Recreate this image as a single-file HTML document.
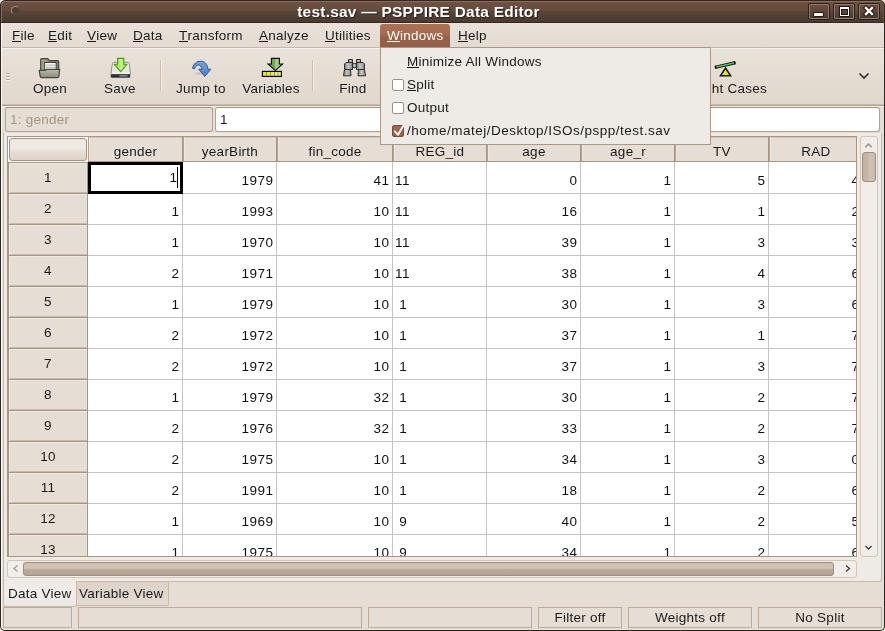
<!DOCTYPE html>
<html><head><meta charset="utf-8">
<style>
*{margin:0;padding:0;box-sizing:border-box}
html,body{width:885px;height:631px;overflow:hidden;background:#efe9e2}
body{position:relative;font-family:"Liberation Sans",sans-serif;font-size:14px;color:#1a1a1a}
.a{position:absolute}
.t{position:absolute;white-space:pre;font-size:13.5px;line-height:17px;letter-spacing:0.25px}
u{text-decoration:none;position:relative}
u::after{content:"";position:absolute;left:0;right:0;top:13px;height:1px;background:currentColor}
#title{left:0;top:0;width:885px;height:23px;background:linear-gradient(#6f5344 0%,#654b3d 45%,#594539 48%,#4b3a30 100%);border:1px solid #33271f;border-radius:5px 5px 0 0;box-shadow:inset 1px 1px #8a6a58,inset -1px 0 #6b5244}
#menubar{left:1px;top:23px;width:883px;height:25px;background:linear-gradient(#e9e2da,#e3dad1);border-bottom:1px solid #c8b8a8}
#toolbar{left:1px;top:48px;width:883px;height:58px;background:linear-gradient(#e9e2da,#e0d7cd);border-top:1px solid #f6f3f0;border-bottom:1px solid #b3a08d;box-shadow:0 1px #f4f0ec,inset 0 -1px #cbbcad}
.sep{position:absolute;top:60px;width:2px;height:31px;border-left:1px solid #cbbcad;border-right:1px solid #f3efeb}
.entry{position:absolute;top:107px;height:25px;border:1px solid #b3a291;border-top-color:#a48f7c;border-radius:3px}
.hdr{position:absolute;background:#e6ddd4;border-left:1px solid #b3a08e;border-right:1px solid #a89584;border-bottom:1px solid #a89584;box-shadow:inset 1px 0 #efe9e3,inset 0 1px #d3c5b8}
.ht{position:absolute;left:0;width:100%;top:6px;text-align:center;white-space:pre;font-size:13.5px;line-height:17px;letter-spacing:0.25px}
.rh{position:absolute;left:0;width:80px;background:#e6ddd4;border-left:1px solid #a89584;border-right:1px solid #a89584;border-bottom:1px solid #a89584;box-shadow:inset 1px 1px #efe9e3,inset 0 -1px #c9baab,1px 0 #bba996}
.rt{position:absolute;left:0;width:100%;text-align:center;white-space:pre;font-size:13.5px;line-height:17px;letter-spacing:0.25px}
.cell{position:absolute;border-right:1px solid #c4c4c4;border-bottom:1px solid #c4c4c4;background:#fff}
.ct{position:absolute;white-space:pre;font-size:13.5px;line-height:16px;color:#111;letter-spacing:0.5px}
.stat{position:absolute;top:607px;height:21px;border:1px solid #bcab99;text-align:center}
.popup{left:380px;top:47px;width:331px;height:98px;background:#eeeae5;border:1px solid #a99888}
.cb{position:absolute;left:392px;width:12px;height:12px;border:1px solid #a38f7d;border-radius:2px;background:#fff}
</style></head><body><div id="root" class="a" style="left:0;top:0;width:885px;height:631px;will-change:transform">
<!-- window frame -->
<div class="a" style="left:0;top:12px;width:885px;height:619px;background:#e6ddd4;border-radius:0 0 5px 5px"></div>

<!-- title bar -->
<div id="title" class="a"></div>
<div class="a" style="left:11px;top:6px;width:9px;height:9px;border-radius:50%;border:1px solid #9d8c82;border-right-color:#5f4c41;border-bottom-color:#5f4c41;background:#4f3c32"></div>
<div class="t" style="left:218.5px;top:3px;width:400px;text-align:center;font-weight:bold;font-size:15.45px;line-height:17px;color:#fff;text-shadow:1px 1px 1px #2a1f19">test.sav — PSPPIRE Data Editor</div>

<!-- menubar -->
<div id="menubar" class="a"></div>
<div class="a" style="left:380px;top:24px;width:70px;height:23px;background:linear-gradient(#ab7256 0%,#a46a4f 48%,#98614a 52%,#925c46 100%);border-radius:3px 3px 0 0"></div>
<div class="t" style="left:12px;top:27px"><u>F</u>ile</div>
<div class="t" style="left:48px;top:27px"><u>E</u>dit</div>
<div class="t" style="left:87px;top:27px"><u>V</u>iew</div>
<div class="t" style="left:133px;top:27px"><u>D</u>ata</div>
<div class="t" style="left:179px;top:27px"><u>T</u>ransform</div>
<div class="t" style="left:259px;top:27px"><u>A</u>nalyze</div>
<div class="t" style="left:325px;top:27px"><u>U</u>tilities</div>
<div class="t" style="left:387px;top:27px;color:#fff"><u>W</u>indows</div>
<div class="t" style="left:458px;top:27px"><u>H</u>elp</div>

<!-- toolbar -->
<div id="toolbar" class="a"></div>

<svg class="a" style="left:0;top:0" width="885" height="106" viewBox="0 0 885 106">
<defs>
<linearGradient id="gfold" x1="0" y1="0" x2="0" y2="1"><stop offset="0" stop-color="#b9bba8"/><stop offset="1" stop-color="#8b8d7a"/></linearGradient>
<linearGradient id="gback" x1="0" y1="0" x2="1" y2="0"><stop offset="0" stop-color="#a3a593"/><stop offset="1" stop-color="#7d7f6e"/></linearGradient>
<linearGradient id="ggreen" x1="0" y1="0" x2="1" y2="0"><stop offset="0" stop-color="#73d216"/><stop offset="0.55" stop-color="#c6f59a"/><stop offset="1" stop-color="#8ae234"/></linearGradient>
<linearGradient id="gdrive" x1="0" y1="0" x2="0" y2="1"><stop offset="0" stop-color="#f6f6f4"/><stop offset="0.7" stop-color="#e2e3df"/><stop offset="1" stop-color="#fbfbfa"/></linearGradient>
<linearGradient id="gvar" x1="0" y1="0" x2="1" y2="0"><stop offset="0" stop-color="#5f9444"/><stop offset="0.5" stop-color="#79a95c"/><stop offset="0.52" stop-color="#a4cf8a"/><stop offset="1" stop-color="#8fbf72"/></linearGradient>
<linearGradient id="gyel" x1="0" y1="0" x2="1" y2="0"><stop offset="0" stop-color="#e6e600"/><stop offset="1" stop-color="#f2f29a"/></linearGradient>
<linearGradient id="gbin" x1="0" y1="0" x2="1" y2="0"><stop offset="0" stop-color="#7d7f7a"/><stop offset="0.45" stop-color="#c4c6c1"/><stop offset="1" stop-color="#8a8c87"/></linearGradient>
<linearGradient id="gblue" x1="0" y1="0" x2="0" y2="1"><stop offset="0" stop-color="#7aa3d6"/><stop offset="1" stop-color="#4a7cc0"/></linearGradient>
<radialGradient id="gshadow"><stop offset="0" stop-color="#9e948a" stop-opacity="0.5"/><stop offset="1" stop-color="#9e948a" stop-opacity="0"/></radialGradient>
</defs>
<!-- handle -->
<g fill="#b5a595"><rect x="6" y="73" width="4" height="1"/><rect x="6" y="76" width="4" height="1"/><rect x="6" y="79" width="4" height="1"/></g>
<g fill="#f5f1ed"><rect x="6" y="74" width="4" height="1"/><rect x="6" y="77" width="4" height="1"/><rect x="6" y="80" width="4" height="1"/></g>
<!-- open folder -->
<path d="M40.7 59.7 Q40.7 58.6 41.8 58.6 L47.8 58.6 L49.2 60.7 L57.6 60.7 Q58.7 60.7 58.7 61.8 L58.7 70.5 L40.7 70.5 Z" fill="url(#gback)" stroke="#45463f" stroke-width="1.2"/>
<rect x="44.7" y="62.5" width="11.4" height="7.6" fill="#fdfdfc" stroke="#3f403a" stroke-width="1"/>
<rect x="46" y="64.6" width="9" height="1" fill="#a9aaa4"/><rect x="46" y="66.8" width="9" height="1" fill="#a9aaa4"/>
<path d="M39.2 70.3 L45.5 70.3 L46.3 69.4 L59.7 69.4 L58.8 76.4 Q58.6 77.6 57.4 77.6 L41.6 77.6 Q40.4 77.6 40.2 76.4 Z" fill="url(#gfold)" stroke="#45463f" stroke-width="1.2" stroke-linejoin="round"/>
<!-- save -->
<path d="M112.4 63.4 Q112.6 62.4 113.6 62.4 L128 62.4 Q129 62.4 129.2 63.4 L130.6 74.4 L110.8 74.4 Z" fill="url(#gdrive)" stroke="#8d8f8a" stroke-width="1"/>
<rect x="110.8" y="74.3" width="19.4" height="3.5" rx="1" fill="#2e3436"/>
<rect x="119.5" y="75.2" width="8" height="1.4" fill="#8b8e8a"/>
<path d="M117.6 58.4 L123.8 58.4 L123.8 64.3 L126.9 64.3 L120.7 71.6 L114.2 64.3 L117.6 64.3 Z" fill="url(#ggreen)" stroke="#4e9a06" stroke-width="1.1" stroke-linejoin="miter"/>
<!-- separators -->
<rect x="160" y="60" width="1" height="31" fill="#cbbdb0"/><rect x="161" y="60" width="1" height="31" fill="#f2ede8"/>
<rect x="312" y="60" width="1" height="31" fill="#cbbdb0"/><rect x="313" y="60" width="1" height="31" fill="#f2ede8"/>
<!-- jump to -->
<ellipse cx="199" cy="73.5" rx="6" ry="2" fill="url(#gshadow)"/>
<path d="M192.6 68.3 C193.4 63.6 196.8 61.2 200.6 61.2 C204.6 61.2 207.4 63.8 207.9 69.2 L210.9 69.2 L204.7 76.4 L198.7 69.2 L201.8 69.2 C201.4 66.3 200.4 65 198.8 65 C196.9 65 195.3 66.4 194.5 68.8 Z" fill="url(#gblue)" stroke="#2a5aa3" stroke-width="1" stroke-linejoin="round"/>
<!-- variables -->
<path d="M271.4 58.4 L279.4 58.4 L279.4 64 L282.6 64 L275.3 70.6 L268 64 L271.4 64 Z" fill="url(#gvar)" stroke="#0c0c0c" stroke-width="1.1"/>
<rect x="262.4" y="71.4" width="19" height="5" fill="url(#gyel)" stroke="#0c0c0c" stroke-width="1.2"/>
<g fill="#8a8a6a"><rect x="266.2" y="72" width="0.9" height="4"/><rect x="270" y="72" width="0.9" height="4"/><rect x="274" y="72" width="0.9" height="4"/><rect x="277.6" y="72" width="0.9" height="4"/></g>
<!-- find binoculars -->
<g stroke="#2b2d2a" stroke-width="1" fill="url(#gbin)" stroke-linejoin="round">
<rect x="348.5" y="59.5" width="4" height="3.5"/><rect x="356.5" y="59.5" width="4" height="3.5"/>
<path d="M346 62.5 L352.5 62.5 L352.5 69.5 L344.5 69.5 L344.5 64 Z"/><path d="M356.5 62.5 L363 62.5 L364.5 64 L364.5 69.5 L356.5 69.5 Z"/>
<circle cx="354.5" cy="65.5" r="2.2"/>
<path d="M344.5 69.5 L350.5 69.5 L351 75.8 L343.5 75.8 Z"/><path d="M358.5 69.5 L364.5 69.5 L365.5 75.8 L358 75.8 Z"/>
</g>
<!-- weight cases -->
<path d="M716.4 67 L734 63" stroke="#111" stroke-width="3.3" stroke-linecap="square"/>
<path d="M716.4 67 L734 63" stroke="#5cc25c" stroke-width="1.3" stroke-linecap="butt"/>
<path d="M725.5 68 L730.6 75.8 L720.4 75.8 Z" fill="#e6e600" stroke="#111" stroke-width="1.5" stroke-linejoin="miter"/>
<!-- chevron -->
<path d="M859.5 73.5 L864 78 L868.5 73.5" fill="none" stroke="#2e2e2e" stroke-width="1.6"/>
</svg>
<div class="t" style="left:0;top:80px;width:100px;text-align:center">Open</div>
<div class="t" style="left:70px;top:80px;width:100px;text-align:center">Save</div>
<div class="t" style="left:151px;top:80px;width:100px;text-align:center">Jump to</div>
<div class="t" style="left:221px;top:80px;width:100px;text-align:center">Variables</div>
<div class="t" style="left:303px;top:80px;width:100px;text-align:center">Find</div>
<div class="t" style="left:667px;top:80px;width:100px;text-align:right">Weight Cases</div>

<!-- entries -->
<div class="entry" style="left:5px;width:208px;background:#e6ddd4"></div>
<div class="t" style="left:10px;top:111px;color:#a39484">1: gender</div>
<div class="entry" style="left:215px;width:665px;background:#fff"></div>
<div class="t" style="left:220px;top:111px">1</div>

<!-- notebook page -->
<div class="a" style="left:3px;top:133px;width:879px;height:449px;border:1px solid #c9b9a9;border-top:none;border-radius:0 0 3px 3px;background:#eeeae5"></div>
<!-- grid frame -->
<div class="a" style="left:7px;top:136px;width:850px;height:421px;border:1px solid #a89584;background:#fff"></div>
<div class="a" style="left:8px;top:137px;width:848px;height:419px;overflow:hidden;background:#fff">
<div class="a" style="left:1px;top:1px;width:78px;height:23px;border:1px solid #a59282;border-radius:3px;background:linear-gradient(#ebe5df 0%,#f0ebe6 45%,#e7e0d8 55%,#ddd3c9 100%)"></div>
<div class="hdr" style="left:80px;top:0;width:95px;height:25px"><span class="ht">gender</span></div>
<div class="hdr" style="left:175px;top:0;width:94px;height:25px"><span class="ht">yearBirth</span></div>
<div class="hdr" style="left:269px;top:0;width:116px;height:25px"><span class="ht">fin_code</span></div>
<div class="hdr" style="left:385px;top:0;width:94px;height:25px"><span class="ht">REG_id</span></div>
<div class="hdr" style="left:479px;top:0;width:94px;height:25px"><span class="ht">age</span></div>
<div class="hdr" style="left:573px;top:0;width:94px;height:25px"><span class="ht">age_r</span></div>
<div class="hdr" style="left:667px;top:0;width:94px;height:25px"><span class="ht">TV</span></div>
<div class="hdr" style="left:761px;top:0;width:94px;height:25px"><span class="ht">RAD</span></div>
<div class="rh" style="top:25px;height:32px;border-top:1px solid #a89584"><span class="rt" style="top:6px">1</span></div>
<div class="cell" style="left:80px;top:25px;width:95px;height:32px"><span class="ct" style="right:4.5px;top:8px">1</span></div>
<div class="cell" style="left:175px;top:25px;width:94px;height:32px"><span class="ct" style="right:2.5px;top:11px">1979</span></div>
<div class="cell" style="left:269px;top:25px;width:116px;height:32px"><span class="ct" style="right:2.5px;top:11px">41</span></div>
<div class="cell" style="left:385px;top:25px;width:94px;height:32px"><span class="ct" style="left:2px;top:11px">11</span></div>
<div class="cell" style="left:479px;top:25px;width:94px;height:32px"><span class="ct" style="right:2.5px;top:11px">0</span></div>
<div class="cell" style="left:573px;top:25px;width:94px;height:32px"><span class="ct" style="right:2.5px;top:11px">1</span></div>
<div class="cell" style="left:667px;top:25px;width:94px;height:32px"><span class="ct" style="right:2.5px;top:11px">5</span></div>
<div class="cell" style="left:761px;top:25px;width:94px;height:32px"><span class="ct" style="right:2.5px;top:11px">4</span></div>
<div class="rh" style="top:57px;height:31px"><span class="rt" style="top:6px">2</span></div>
<div class="cell" style="left:80px;top:57px;width:95px;height:31px"><span class="ct" style="right:2.5px;top:10px">1</span></div>
<div class="cell" style="left:175px;top:57px;width:94px;height:31px"><span class="ct" style="right:2.5px;top:10px">1993</span></div>
<div class="cell" style="left:269px;top:57px;width:116px;height:31px"><span class="ct" style="right:2.5px;top:10px">10</span></div>
<div class="cell" style="left:385px;top:57px;width:94px;height:31px"><span class="ct" style="left:2px;top:10px">11</span></div>
<div class="cell" style="left:479px;top:57px;width:94px;height:31px"><span class="ct" style="right:2.5px;top:10px">16</span></div>
<div class="cell" style="left:573px;top:57px;width:94px;height:31px"><span class="ct" style="right:2.5px;top:10px">1</span></div>
<div class="cell" style="left:667px;top:57px;width:94px;height:31px"><span class="ct" style="right:2.5px;top:10px">1</span></div>
<div class="cell" style="left:761px;top:57px;width:94px;height:31px"><span class="ct" style="right:2.5px;top:10px">2</span></div>
<div class="rh" style="top:88px;height:31px"><span class="rt" style="top:6px">3</span></div>
<div class="cell" style="left:80px;top:88px;width:95px;height:31px"><span class="ct" style="right:2.5px;top:10px">1</span></div>
<div class="cell" style="left:175px;top:88px;width:94px;height:31px"><span class="ct" style="right:2.5px;top:10px">1970</span></div>
<div class="cell" style="left:269px;top:88px;width:116px;height:31px"><span class="ct" style="right:2.5px;top:10px">10</span></div>
<div class="cell" style="left:385px;top:88px;width:94px;height:31px"><span class="ct" style="left:2px;top:10px">11</span></div>
<div class="cell" style="left:479px;top:88px;width:94px;height:31px"><span class="ct" style="right:2.5px;top:10px">39</span></div>
<div class="cell" style="left:573px;top:88px;width:94px;height:31px"><span class="ct" style="right:2.5px;top:10px">1</span></div>
<div class="cell" style="left:667px;top:88px;width:94px;height:31px"><span class="ct" style="right:2.5px;top:10px">3</span></div>
<div class="cell" style="left:761px;top:88px;width:94px;height:31px"><span class="ct" style="right:2.5px;top:10px">3</span></div>
<div class="rh" style="top:119px;height:31px"><span class="rt" style="top:6px">4</span></div>
<div class="cell" style="left:80px;top:119px;width:95px;height:31px"><span class="ct" style="right:2.5px;top:10px">2</span></div>
<div class="cell" style="left:175px;top:119px;width:94px;height:31px"><span class="ct" style="right:2.5px;top:10px">1971</span></div>
<div class="cell" style="left:269px;top:119px;width:116px;height:31px"><span class="ct" style="right:2.5px;top:10px">10</span></div>
<div class="cell" style="left:385px;top:119px;width:94px;height:31px"><span class="ct" style="left:2px;top:10px">11</span></div>
<div class="cell" style="left:479px;top:119px;width:94px;height:31px"><span class="ct" style="right:2.5px;top:10px">38</span></div>
<div class="cell" style="left:573px;top:119px;width:94px;height:31px"><span class="ct" style="right:2.5px;top:10px">1</span></div>
<div class="cell" style="left:667px;top:119px;width:94px;height:31px"><span class="ct" style="right:2.5px;top:10px">4</span></div>
<div class="cell" style="left:761px;top:119px;width:94px;height:31px"><span class="ct" style="right:2.5px;top:10px">6</span></div>
<div class="rh" style="top:150px;height:31px"><span class="rt" style="top:6px">5</span></div>
<div class="cell" style="left:80px;top:150px;width:95px;height:31px"><span class="ct" style="right:2.5px;top:10px">1</span></div>
<div class="cell" style="left:175px;top:150px;width:94px;height:31px"><span class="ct" style="right:2.5px;top:10px">1979</span></div>
<div class="cell" style="left:269px;top:150px;width:116px;height:31px"><span class="ct" style="right:2.5px;top:10px">10</span></div>
<div class="cell" style="left:385px;top:150px;width:94px;height:31px"><span class="ct" style="left:2px;top:10px"> 1</span></div>
<div class="cell" style="left:479px;top:150px;width:94px;height:31px"><span class="ct" style="right:2.5px;top:10px">30</span></div>
<div class="cell" style="left:573px;top:150px;width:94px;height:31px"><span class="ct" style="right:2.5px;top:10px">1</span></div>
<div class="cell" style="left:667px;top:150px;width:94px;height:31px"><span class="ct" style="right:2.5px;top:10px">3</span></div>
<div class="cell" style="left:761px;top:150px;width:94px;height:31px"><span class="ct" style="right:2.5px;top:10px">6</span></div>
<div class="rh" style="top:181px;height:31px"><span class="rt" style="top:6px">6</span></div>
<div class="cell" style="left:80px;top:181px;width:95px;height:31px"><span class="ct" style="right:2.5px;top:10px">2</span></div>
<div class="cell" style="left:175px;top:181px;width:94px;height:31px"><span class="ct" style="right:2.5px;top:10px">1972</span></div>
<div class="cell" style="left:269px;top:181px;width:116px;height:31px"><span class="ct" style="right:2.5px;top:10px">10</span></div>
<div class="cell" style="left:385px;top:181px;width:94px;height:31px"><span class="ct" style="left:2px;top:10px"> 1</span></div>
<div class="cell" style="left:479px;top:181px;width:94px;height:31px"><span class="ct" style="right:2.5px;top:10px">37</span></div>
<div class="cell" style="left:573px;top:181px;width:94px;height:31px"><span class="ct" style="right:2.5px;top:10px">1</span></div>
<div class="cell" style="left:667px;top:181px;width:94px;height:31px"><span class="ct" style="right:2.5px;top:10px">1</span></div>
<div class="cell" style="left:761px;top:181px;width:94px;height:31px"><span class="ct" style="right:2.5px;top:10px">7</span></div>
<div class="rh" style="top:212px;height:31px"><span class="rt" style="top:6px">7</span></div>
<div class="cell" style="left:80px;top:212px;width:95px;height:31px"><span class="ct" style="right:2.5px;top:10px">2</span></div>
<div class="cell" style="left:175px;top:212px;width:94px;height:31px"><span class="ct" style="right:2.5px;top:10px">1972</span></div>
<div class="cell" style="left:269px;top:212px;width:116px;height:31px"><span class="ct" style="right:2.5px;top:10px">10</span></div>
<div class="cell" style="left:385px;top:212px;width:94px;height:31px"><span class="ct" style="left:2px;top:10px"> 1</span></div>
<div class="cell" style="left:479px;top:212px;width:94px;height:31px"><span class="ct" style="right:2.5px;top:10px">37</span></div>
<div class="cell" style="left:573px;top:212px;width:94px;height:31px"><span class="ct" style="right:2.5px;top:10px">1</span></div>
<div class="cell" style="left:667px;top:212px;width:94px;height:31px"><span class="ct" style="right:2.5px;top:10px">3</span></div>
<div class="cell" style="left:761px;top:212px;width:94px;height:31px"><span class="ct" style="right:2.5px;top:10px">7</span></div>
<div class="rh" style="top:243px;height:31px"><span class="rt" style="top:6px">8</span></div>
<div class="cell" style="left:80px;top:243px;width:95px;height:31px"><span class="ct" style="right:2.5px;top:10px">1</span></div>
<div class="cell" style="left:175px;top:243px;width:94px;height:31px"><span class="ct" style="right:2.5px;top:10px">1979</span></div>
<div class="cell" style="left:269px;top:243px;width:116px;height:31px"><span class="ct" style="right:2.5px;top:10px">32</span></div>
<div class="cell" style="left:385px;top:243px;width:94px;height:31px"><span class="ct" style="left:2px;top:10px"> 1</span></div>
<div class="cell" style="left:479px;top:243px;width:94px;height:31px"><span class="ct" style="right:2.5px;top:10px">30</span></div>
<div class="cell" style="left:573px;top:243px;width:94px;height:31px"><span class="ct" style="right:2.5px;top:10px">1</span></div>
<div class="cell" style="left:667px;top:243px;width:94px;height:31px"><span class="ct" style="right:2.5px;top:10px">2</span></div>
<div class="cell" style="left:761px;top:243px;width:94px;height:31px"><span class="ct" style="right:2.5px;top:10px">7</span></div>
<div class="rh" style="top:274px;height:31px"><span class="rt" style="top:6px">9</span></div>
<div class="cell" style="left:80px;top:274px;width:95px;height:31px"><span class="ct" style="right:2.5px;top:10px">2</span></div>
<div class="cell" style="left:175px;top:274px;width:94px;height:31px"><span class="ct" style="right:2.5px;top:10px">1976</span></div>
<div class="cell" style="left:269px;top:274px;width:116px;height:31px"><span class="ct" style="right:2.5px;top:10px">32</span></div>
<div class="cell" style="left:385px;top:274px;width:94px;height:31px"><span class="ct" style="left:2px;top:10px"> 1</span></div>
<div class="cell" style="left:479px;top:274px;width:94px;height:31px"><span class="ct" style="right:2.5px;top:10px">33</span></div>
<div class="cell" style="left:573px;top:274px;width:94px;height:31px"><span class="ct" style="right:2.5px;top:10px">1</span></div>
<div class="cell" style="left:667px;top:274px;width:94px;height:31px"><span class="ct" style="right:2.5px;top:10px">2</span></div>
<div class="cell" style="left:761px;top:274px;width:94px;height:31px"><span class="ct" style="right:2.5px;top:10px">7</span></div>
<div class="rh" style="top:305px;height:31px"><span class="rt" style="top:6px">10</span></div>
<div class="cell" style="left:80px;top:305px;width:95px;height:31px"><span class="ct" style="right:2.5px;top:10px">2</span></div>
<div class="cell" style="left:175px;top:305px;width:94px;height:31px"><span class="ct" style="right:2.5px;top:10px">1975</span></div>
<div class="cell" style="left:269px;top:305px;width:116px;height:31px"><span class="ct" style="right:2.5px;top:10px">10</span></div>
<div class="cell" style="left:385px;top:305px;width:94px;height:31px"><span class="ct" style="left:2px;top:10px"> 1</span></div>
<div class="cell" style="left:479px;top:305px;width:94px;height:31px"><span class="ct" style="right:2.5px;top:10px">34</span></div>
<div class="cell" style="left:573px;top:305px;width:94px;height:31px"><span class="ct" style="right:2.5px;top:10px">1</span></div>
<div class="cell" style="left:667px;top:305px;width:94px;height:31px"><span class="ct" style="right:2.5px;top:10px">3</span></div>
<div class="cell" style="left:761px;top:305px;width:94px;height:31px"><span class="ct" style="right:2.5px;top:10px">0</span></div>
<div class="rh" style="top:336px;height:31px"><span class="rt" style="top:6px">11</span></div>
<div class="cell" style="left:80px;top:336px;width:95px;height:31px"><span class="ct" style="right:2.5px;top:10px">2</span></div>
<div class="cell" style="left:175px;top:336px;width:94px;height:31px"><span class="ct" style="right:2.5px;top:10px">1991</span></div>
<div class="cell" style="left:269px;top:336px;width:116px;height:31px"><span class="ct" style="right:2.5px;top:10px">10</span></div>
<div class="cell" style="left:385px;top:336px;width:94px;height:31px"><span class="ct" style="left:2px;top:10px"> 1</span></div>
<div class="cell" style="left:479px;top:336px;width:94px;height:31px"><span class="ct" style="right:2.5px;top:10px">18</span></div>
<div class="cell" style="left:573px;top:336px;width:94px;height:31px"><span class="ct" style="right:2.5px;top:10px">1</span></div>
<div class="cell" style="left:667px;top:336px;width:94px;height:31px"><span class="ct" style="right:2.5px;top:10px">2</span></div>
<div class="cell" style="left:761px;top:336px;width:94px;height:31px"><span class="ct" style="right:2.5px;top:10px">6</span></div>
<div class="rh" style="top:367px;height:31px"><span class="rt" style="top:6px">12</span></div>
<div class="cell" style="left:80px;top:367px;width:95px;height:31px"><span class="ct" style="right:2.5px;top:10px">1</span></div>
<div class="cell" style="left:175px;top:367px;width:94px;height:31px"><span class="ct" style="right:2.5px;top:10px">1969</span></div>
<div class="cell" style="left:269px;top:367px;width:116px;height:31px"><span class="ct" style="right:2.5px;top:10px">10</span></div>
<div class="cell" style="left:385px;top:367px;width:94px;height:31px"><span class="ct" style="left:2px;top:10px"> 9</span></div>
<div class="cell" style="left:479px;top:367px;width:94px;height:31px"><span class="ct" style="right:2.5px;top:10px">40</span></div>
<div class="cell" style="left:573px;top:367px;width:94px;height:31px"><span class="ct" style="right:2.5px;top:10px">1</span></div>
<div class="cell" style="left:667px;top:367px;width:94px;height:31px"><span class="ct" style="right:2.5px;top:10px">2</span></div>
<div class="cell" style="left:761px;top:367px;width:94px;height:31px"><span class="ct" style="right:2.5px;top:10px">5</span></div>
<div class="rh" style="top:398px;height:31px"><span class="rt" style="top:6px">13</span></div>
<div class="cell" style="left:80px;top:398px;width:95px;height:31px"><span class="ct" style="right:2.5px;top:10px">1</span></div>
<div class="cell" style="left:175px;top:398px;width:94px;height:31px"><span class="ct" style="right:2.5px;top:10px">1975</span></div>
<div class="cell" style="left:269px;top:398px;width:116px;height:31px"><span class="ct" style="right:2.5px;top:10px">10</span></div>
<div class="cell" style="left:385px;top:398px;width:94px;height:31px"><span class="ct" style="left:2px;top:10px"> 9</span></div>
<div class="cell" style="left:479px;top:398px;width:94px;height:31px"><span class="ct" style="right:2.5px;top:10px">34</span></div>
<div class="cell" style="left:573px;top:398px;width:94px;height:31px"><span class="ct" style="right:2.5px;top:10px">1</span></div>
<div class="cell" style="left:667px;top:398px;width:94px;height:31px"><span class="ct" style="right:2.5px;top:10px">2</span></div>
<div class="cell" style="left:761px;top:398px;width:94px;height:31px"><span class="ct" style="right:2.5px;top:10px">6</span></div>
<div class="a" style="left:80px;top:25px;width:95px;height:32px;border:3px solid #000"></div>
<div class="a" style="left:169px;top:30px;width:1px;height:21px;background:#000"></div>
</div>
<!-- notebook page frame -->

<!-- vertical scrollbar -->
<div class="a" style="left:860px;top:136px;width:18px;height:421px;border:1px solid #d3c5b7;border-radius:3px;background:#f1ede9"></div>
<div class="a" style="left:862px;top:152px;width:14px;height:30px;border:1px solid #a08d7c;border-radius:3px;background:linear-gradient(90deg,#c2b2a3 0%,#c7b8aa 48%,#d0c3b7 52%,#c8baad 100%)"></div>
<!-- horizontal scrollbar -->
<div class="a" style="left:7px;top:560px;width:850px;height:18px;border:1px solid #d3c5b7;border-radius:3px;background:#f1ede9"></div>
<div class="a" style="left:23px;top:562px;width:811px;height:14px;border:1px solid #a08d7c;border-radius:3px;background:linear-gradient(#cdbfb2 0%,#d0c3b6 45%,#bcab9b 50%,#b5a494 100%)"></div>
<svg class="a" style="left:0;top:0" width="885" height="631" viewBox="0 0 885 631">
<path d="M865.3 147.3 L868.5 144.1 L871.7 147.3" fill="none" stroke="#9e8d7d" stroke-width="1.4"/>
<path d="M865.5 546 L868.5 549 L871.5 546" fill="none" stroke="#3a3a3a" stroke-width="1.3"/>
<path d="M17.5 565.5 L14 568.5 L17.5 571.5" fill="none" stroke="#a89888" stroke-width="1.2"/>
<path d="M846 565.5 L849.5 568.5 L846 571.5" fill="none" stroke="#3a3a3a" stroke-width="1.3"/>
</svg>
<!-- tabs -->
<div class="a" style="left:76px;top:581px;width:93px;height:25px;border:1px solid #c9b9a9;border-radius:0 0 2px 2px;background:linear-gradient(#dcd2c8,#e3dad1)"></div>
<div class="a" style="left:3px;top:581px;width:74px;height:26px;border:1px solid #c9b9a9;border-top:none;border-radius:0 0 3px 3px;background:linear-gradient(#eeeae5,#f1eeea 50%,#ebe6e0)"></div>
<div class="t" style="left:8px;top:585px">Data View</div>
<div class="t" style="left:79px;top:585px">Variable View</div>
<!-- title buttons -->
<div class="a" style="left:808px;top:3px;width:22px;height:17px;border:1px solid #2b1f19;border-radius:2px;box-shadow:inset 0 0 0 1px #8d7a70;background:linear-gradient(#70513f,#4a3a31)"></div>
<div class="a" style="left:833px;top:3px;width:22px;height:17px;border:1px solid #2b1f19;border-radius:2px;box-shadow:inset 0 0 0 1px #8d7a70;background:linear-gradient(#70513f,#4a3a31)"></div>
<div class="a" style="left:858px;top:3px;width:22px;height:17px;border:1px solid #2b1f19;border-radius:2px;box-shadow:inset 0 0 0 1px #8d7a70;background:linear-gradient(#70513f,#4a3a31)"></div>
<div class="a" style="left:814px;top:12.5px;width:9px;height:3px;background:#fff;box-shadow:0 0 0 1px #231915;border-radius:1px"></div>
<div class="a" style="left:839.5px;top:6.5px;width:9px;height:9px;border:1.4px solid #fff;border-top-width:2.2px;box-shadow:0 0 0 1px #231915,inset 0 0 0 1px #231915"></div>
<svg class="a" style="left:0;top:0" width="885" height="30" viewBox="0 0 885 30">
<path d="M866 8 L872 14 M872 8 L866 14" stroke="#231915" stroke-width="4.4" stroke-linecap="square"/>
<path d="M866 8 L872 14 M872 8 L866 14" stroke="#fff" stroke-width="2.4" stroke-linecap="square"/>
</svg>

<!-- status -->
<div class="stat" style="left:3px;width:69px"></div>
<div class="stat" style="left:78px;width:284px"></div>
<div class="stat" style="left:368px;width:164px"></div>
<div class="stat" style="left:538px;width:84px"></div>
<div class="t" style="left:538px;top:609px;width:84px;text-align:center">Filter off</div>
<div class="stat" style="left:628px;width:124px"></div>
<div class="t" style="left:628px;top:609px;width:124px;text-align:center">Weights off</div>
<div class="stat" style="left:758px;width:124px"></div>
<div class="t" style="left:758px;top:609px;width:124px;text-align:center">No Split</div>

<!-- popup -->
<div class="a popup"></div>
<div class="t" style="left:407px;top:53px"><u>M</u>inimize All Windows</div>
<div class="cb" style="top:79px"></div>
<div class="t" style="left:407px;top:76px"><u>S</u>plit</div>
<div class="cb" style="top:102px"></div>
<div class="t" style="left:407px;top:99px">Output</div>
<div class="cb" style="top:125px;background:linear-gradient(#a36a50,#94604a);border-color:#7a4b36"></div>
<div class="t" style="left:407px;top:122px;letter-spacing:0.5px">/home/matej/Desktop/ISOs/pspp/test.sav</div>
<!-- frame overlay -->
<div class="a" style="left:0;top:22px;width:1px;height:603px;background:#2a2622"></div>
<div class="a" style="left:1px;top:23px;width:1px;height:603px;background:#fff"></div>
<div class="a" style="left:884px;top:22px;width:1px;height:603px;background:#2a2622"></div>
<div class="a" style="left:0;top:620px;width:885px;height:11px;border:1px solid #2a2622;border-top:none;border-radius:0 0 5px 5px;box-shadow:inset 1px 0 #fff"></div>
<!-- check mark -->
<svg class="a" style="left:380px;top:120px" width="30" height="20" viewBox="380 120 30 20"><path d="M394.8 131.4 L398 134.8 L403.2 126" fill="none" stroke="#fff" stroke-width="1.8" stroke-linecap="round" stroke-linejoin="round"/></svg>
</div></body></html>
